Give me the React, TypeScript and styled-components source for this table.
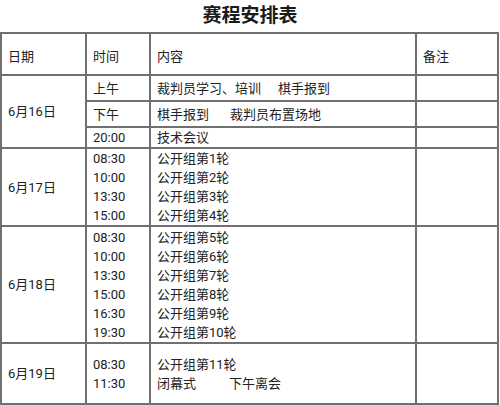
import React from "react";
import styled, { createGlobalStyle } from "styled-components";

const Global = createGlobalStyle`
  html, body { margin: 0; padding: 0; background: #ffffff; }
  body {
    font-family: Roboto, "Noto Sans CJK SC", sans-serif;
    color: #222222;
  }
  * { box-sizing: border-box; }
`;

const Page = styled.div`
  width: 500px;
  display: flex;
  flex-direction: column;
`;

const Title = styled.h1`
  margin: 0;
  height: 32px;
  line-height: 32px;
  text-align: center;
  font-size: 19px;
  font-weight: 700;
  color: #1a1a1a;
  font-family: Roboto, "Noto Sans CJK SC", sans-serif;
`;

const Table = styled.table`
  width: 499px;
  table-layout: fixed;
  border-collapse: separate;
  border-spacing: 0;
  border-left: 2px solid #707070;
  border-top: 2px solid #707070;
  font-size: 13px;
`;

const Row = styled.tr<{ $h: number }>`
  height: ${(p) => p.$h}px;
`;

const Cell = styled.td<{ $padTop?: number }>`
  border-right: 2px solid #707070;
  border-bottom: 2px solid #707070;
  padding: ${(p) => p.$padTop ?? 0}px 6px 0 6px;
  vertical-align: middle;
  line-height: 19px;
  white-space: nowrap;
  overflow: hidden;
`;

const Line = styled.div`
  height: 19px;
  line-height: 19px;
`;

const Gap = styled.span<{ $w: number }>`
  display: inline-block;
  width: ${(p) => p.$w}px;
`;

type Block = {
  date: string;
  h: number;
  times: string[];
  items: React.ReactNode[];
};

const blocks: Block[] = [
  {
    date: "6月17日",
    h: 77,
    times: ["08:30", "10:00", "13:30", "15:00"],
    items: ["公开组第1轮", "公开组第2轮", "公开组第3轮", "公开组第4轮"],
  },
  {
    date: "6月18日",
    h: 117,
    times: ["08:30", "10:00", "13:30", "15:00", "16:30", "19:30"],
    items: [
      "公开组第5轮",
      "公开组第6轮",
      "公开组第7轮",
      "公开组第8轮",
      "公开组第9轮",
      "公开组第10轮",
    ],
  },
  {
    date: "6月19日",
    h: 61,
    times: ["08:30", "11:30"],
    items: [
      "公开组第11轮",
      <>
        闭幕式<Gap $w={33} />下午离会
      </>,
    ],
  },
];

export default function App() {
  return (
    <Page>
      <Global />
      <Title>赛程安排表</Title>
      <Table>
        <colgroup>
          <col style={{ width: 85 }} />
          <col style={{ width: 64 }} />
          <col style={{ width: 266 }} />
          <col style={{ width: 82 }} />
        </colgroup>
        <tbody>
          <Row $h={42}>
            <Cell $padTop={4}>日期</Cell>
            <Cell $padTop={4}>时间</Cell>
            <Cell $padTop={4}>内容</Cell>
            <Cell $padTop={4}>备注</Cell>
          </Row>
          <Row $h={26}>
            <Cell rowSpan={3}>6月16日</Cell>
            <Cell>上午</Cell>
            <Cell>
              裁判员学习、培训<Gap $w={17} />棋手报到
            </Cell>
            <Cell />
          </Row>
          <Row $h={26}>
            <Cell>下午</Cell>
            <Cell>
              棋手报到<Gap $w={21} />裁判员布置场地
            </Cell>
            <Cell />
          </Row>
          <Row $h={20}>
            <Cell>20:00</Cell>
            <Cell>技术会议</Cell>
            <Cell />
          </Row>
          {blocks.map((b) => (
            <Row $h={b.h} key={b.date}>
              <Cell>{b.date}</Cell>
              <Cell>
                {b.times.map((t, i) => (
                  <Line key={i}>{t}</Line>
                ))}
              </Cell>
              <Cell>
                {b.items.map((t, i) => (
                  <Line key={i}>{t}</Line>
                ))}
              </Cell>
              <Cell />
            </Row>
          ))}
        </tbody>
      </Table>
    </Page>
  );
}
